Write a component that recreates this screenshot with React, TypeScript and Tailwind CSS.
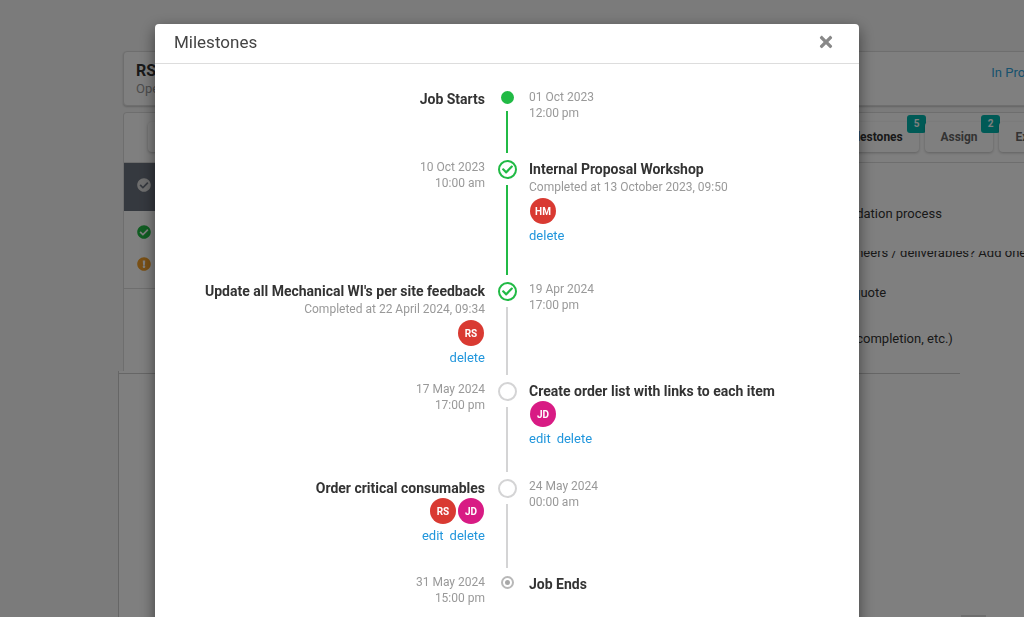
import type { ReactNode } from 'react';
import { FaCheckCircle, FaExclamationCircle, FaTimes, FaCheck } from 'react-icons/fa';

type Status = 'start' | 'done' | 'open' | 'end';

interface Milestone {
  title: string;
  date: string;
  time: string;
  status: Status;
  completedAt?: string;
  people?: string[];
  actions?: string[];
  rowClass: string;
  lineClass?: string;
}

const milestones: Milestone[] = [
  {
    title: 'Job Starts',
    date: '01 Oct 2023',
    time: '12:00 pm',
    status: 'start',
    rowClass: 'min-h-[70px]',
    lineClass: 'bg-[#21ba45]',
  },
  {
    title: 'Internal Proposal Workshop',
    date: '10 Oct 2023',
    time: '10:00 am',
    status: 'done',
    completedAt: '13 October 2023, 09:50',
    people: ['HM'],
    actions: ['delete'],
    rowClass: 'min-h-[122px]',
    lineClass: 'bg-[#21ba45]',
  },
  {
    title: "Update all Mechanical WI's per site feedback",
    date: '19 Apr 2024',
    time: '17:00 pm',
    status: 'done',
    completedAt: '22 April 2024, 09:34',
    people: ['RS'],
    actions: ['delete'],
    rowClass: 'min-h-[100px]',
    lineClass: 'bg-[#d4d4d5]',
  },
  {
    title: 'Create order list with links to each item',
    date: '17 May 2024',
    time: '17:00 pm',
    status: 'open',
    people: ['JD'],
    actions: ['edit', 'delete'],
    rowClass: 'min-h-[97px]',
    lineClass: 'bg-[#d4d4d5]',
  },
  {
    title: 'Order critical consumables',
    date: '24 May 2024',
    time: '00:00 am',
    status: 'open',
    people: ['RS', 'JD'],
    actions: ['edit', 'delete'],
    rowClass: 'min-h-[96px]',
    lineClass: 'bg-[#d4d4d5]',
  },
  {
    title: 'Job Ends',
    date: '31 May 2024',
    time: '15:00 pm',
    status: 'end',
    rowClass: 'min-h-[96px]',
  },
];

const avatarColors: Record<string, string> = {
  HM: 'bg-[#d93a32]',
  RS: 'bg-[#d93a32]',
  JD: 'bg-[#d81b84]',
};

function Marker({ status }: { status: Status }) {
  if (status === 'start') {
    return <span className="w-[13px] h-[13px] rounded-full bg-[#21ba45]" />;
  }
  if (status === 'done') {
    return (
      <span className="w-[19px] h-[19px] rounded-full border-2 border-[#21ba45] flex items-center justify-center">
        <FaCheck size={11} className="text-[#21ba45]" />
      </span>
    );
  }
  if (status === 'open') {
    return <span className="w-[19px] h-[19px] rounded-full border-2 border-[#d4d4d5]" />;
  }
  return (
    <span className="w-[13px] h-[13px] rounded-full border-2 border-[#b8b8b8] flex items-center justify-center">
      <span className="w-[5px] h-[5px] rounded-full bg-[#a8a8a8]" />
    </span>
  );
}

function Details({ item, alignRight }: { item: Milestone; alignRight: boolean }) {
  return (
    <div className={alignRight ? 'flex flex-col items-end pt-1.5' : 'flex flex-col items-start pt-1.5'}>
      <h3 className="text-sm leading-5 font-bold text-[#333333] whitespace-nowrap">{item.title}</h3>
      {item.completedAt && (
        <p className="pb-[3px] text-xs leading-4 text-[#999999] whitespace-nowrap">Completed at {item.completedAt}</p>
      )}
      {item.people && (
        <div className="flex gap-0.5 px-px">
          {item.people.map(p => (
            <span
              key={p}
              className={`w-[26px] h-[26px] rounded-full flex items-center justify-center text-[10px] font-bold text-white ${avatarColors[p]}`}
            >
              {p}
            </span>
          ))}
        </div>
      )}
      {item.actions && (
        <div className="flex gap-1.5 pt-0.5">
          {item.actions.map(a => (
            <button key={a} className="text-[13px] leading-5 text-[#2196dc] hover:underline">
              {a}
            </button>
          ))}
        </div>
      )}
    </div>
  );
}

function When({ item, alignRight }: { item: Milestone; alignRight: boolean }) {
  return (
    <div className={`pt-1.5 text-xs leading-4 text-[#999999] ${alignRight ? 'text-right' : 'text-left'}`}>
      <p>{item.date}</p>
      <p>{item.time}</p>
    </div>
  );
}

function MilestoneRow({ item, index }: { item: Milestone; index: number }) {
  // Details alternate sides, starting on the left
  const detailsLeft = index % 2 === 0;
  const small = item.status === 'start' || item.status === 'end';
  return (
    <li className={`grid grid-cols-[1fr_44px_1fr] ${item.rowClass}`}>
      {detailsLeft ? <Details item={item} alignRight /> : <When item={item} alignRight />}
      <div className="flex flex-col items-center">
        <span className={`flex items-center justify-center shrink-0 ${small ? 'h-7' : 'h-8'}`}>
          <Marker status={item.status} />
        </span>
        {item.lineClass && <span className={`w-0.5 grow ${item.lineClass}`} />}
      </div>
      {detailsLeft ? <When item={item} alignRight={false} /> : <Details item={item} alignRight={false} />}
    </li>
  );
}

function ToolbarButton({ label, badge, active, className }: { label: ReactNode; badge?: number; active?: boolean; className: string }) {
  return (
    <button
      className={`relative h-[30px] shrink-0 rounded bg-white text-xs shadow-[0_1px_3px_rgba(0,0,0,0.25)] font-bold ${
        active ? 'text-[#333333]' : 'text-[#666666]'
      } ${className}`}
    >
      {label}
      {badge !== undefined && (
        <span className="absolute -top-[7px] -right-[7px] w-[19px] h-[18px] rounded-[3px] bg-[#00b5ad] text-white text-[10px] leading-[18px] font-bold">
          {badge}
        </span>
      )}
    </button>
  );
}

function JobPage() {
  return (
    <div className="h-screen overflow-hidden bg-[#f7f7f7] pt-[51px] flex flex-col">
      <header className="ml-[123px] -mr-[60px] h-[55px] shrink-0 bg-white border border-[#dddddd] rounded shadow-[0_1px_2px_rgba(0,0,0,0.2)] px-3 flex items-start justify-between">
        <div className="pt-[9px]">
          <h1 className="text-base leading-5 font-bold text-[#333333]">RS</h1>
          <p className="text-[13px] leading-4 text-[#999999]">Open</p>
        </div>
        <a href="#status" className="pt-[11px] pr-3.5 text-[13px] leading-5 text-[#2fa4dc]">In Progress</a>
      </header>

      <div className="mt-1.5 ml-[123px] -mr-[60px] h-[259px] shrink-0 bg-white border border-b-0 border-[#dddddd] rounded-t">
        <div className="h-[50px] border-b border-[#dddddd] pl-6 pt-[9px] flex gap-1.5">
          <div className="w-[673px] shrink-0">
            <ToolbarButton label={<span className="sr-only">Back</span>} className="w-24" />
          </div>
          <ToolbarButton label="Milestones" badge={5} active className="w-[92px]" />
          <ToolbarButton label="Assign" badge={2} className="w-[68px]" />
          <ToolbarButton label="Export" className="w-[68px]" />
        </div>
        <div className="flex items-start">
          <aside className="w-64 shrink-0 border-b border-[#dddddd]">
            <div className="h-12 bg-[#6b727e] pl-[13px] pb-1 flex items-center">
              <FaCheckCircle size={14} className="text-[#dddddd]" />
            </div>
            <div className="pl-[13px] pt-3.5 pb-[17px] flex flex-col gap-[18px]">
              <FaCheckCircle size={14} className="text-[#21ba45]" />
              <FaExclamationCircle size={14} className="text-[#f2a02b]" />
            </div>
          </aside>
          <div className="ml-[473px] pt-[41px] text-[13px] text-[#333333] whitespace-pre">
            <p className="leading-5">idation process</p>
            <div className="mt-[27px] h-3 overflow-hidden flex items-end">
              <p className="leading-5">ineers / deliverables? Add one</p>
            </div>
            <p className="mt-5 leading-5">quote</p>
            <p className="mt-[26px] leading-5"> completion, etc.)</p>
          </div>
        </div>
      </div>

      <div className="ml-[118px] grow bg-white border-l border-[#cccccc] flex flex-col justify-between">
        <div className="mt-[2px] mr-16 border-t border-[#cccccc]" />
        <div className="mr-[38px] self-end w-[25px] h-0.5 bg-[#dddddd]" />
      </div>
    </div>
  );
}

export default function App() {
  return (
    <div className="font-[Roboto,'Liberation_Sans',sans-serif]">
      <JobPage />

      {/* Modal */}
      <div className="fixed inset-0 bg-black/50 overflow-hidden pt-6 pr-2.5">
        <div
          role="dialog"
          aria-labelledby="milestones-title"
          className="w-full max-w-[704px] min-h-screen mx-auto bg-white rounded shadow-[0_5px_15px_rgba(0,0,0,0.5)]"
        >
          <div className="h-10 border-b border-[#dddddd] pl-[19px] pr-6 pb-[3px] flex items-center justify-between">
            <h2 id="milestones-title" className="text-[17px] leading-6 text-[#444444]">Milestones</h2>
            <button aria-label="Close" className="text-[#888888] hover:text-black">
              <FaTimes size={18} />
            </button>
          </div>
          <ol className="pt-[19px]">
            {milestones.map((item, i) => (
              <MilestoneRow key={item.title} item={item} index={i} />
            ))}
          </ol>
        </div>
      </div>
    </div>
  );
}
